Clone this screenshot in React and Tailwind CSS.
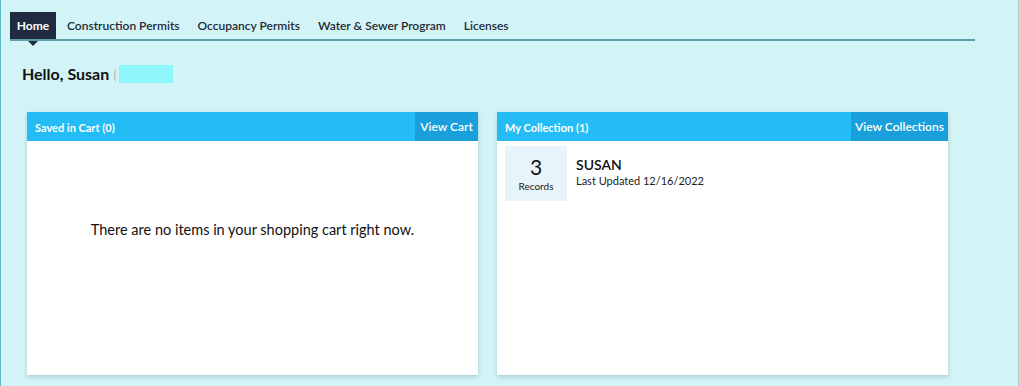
import React from 'react';

const tabs = ['Construction Permits', 'Occupancy Permits', 'Water & Sewer Program', 'Licenses'];

const Card = ({ title, action, actionWidth, children }) => (
  <div className="flex flex-col bg-white shadow-[0_2px_4px_rgba(80,140,150,0.35)] h-[263px]">
    <div className="flex items-stretch h-[29px] bg-[#23bcf4]">
      <p className="flex-1 pl-2 pt-[10px] text-[11px] font-bold text-white leading-none">{title}</p>
      <button className={`${actionWidth} bg-[#199fdc] text-white text-[12px] font-semibold leading-none`}>{action}</button>
    </div>
    {children}
  </div>
);

const App = () => {
  return (
    <div className="w-[1019px] h-[386px] bg-[#d3f4f6] border-l border-[#5cb8c4] border-r border-r-[#b9c9cc] overflow-hidden" style={{ fontFamily: 'Lato, "Open Sans", sans-serif' }}>
      {/* tab bar */}
      <div className="ml-[9px] mr-[43px] mt-[12px] flex items-end border-b-2 border-[#5d9eaa] h-[29px]">
        <div className="relative h-[27px] w-[46px] mr-[2px] bg-[#1e2b40] text-white text-[12px] font-bold flex items-center justify-center">
          Home
          <span className="absolute left-1/2 -translate-x-1/2 top-full mt-[2px] w-0 h-0 border-x-[5px] border-x-transparent border-t-[5px] border-t-[#1e2b40]"></span>
        </div>
        {tabs.map((t) => (
          <div key={t} className="h-[27px] px-[9px] flex items-center text-[12px] font-semibold text-[#1f2a36]">{t}</div>
        ))}
      </div>

      <div className="flex items-center mt-[23px] ml-[21px] h-[20px]">
        <h1 className="text-[16px] font-bold text-[#111]">Hello, Susan</h1>
        <span className="ml-[4px] text-[16px] text-[#bbb] w-[3px] overflow-hidden">(</span>
        <span className="ml-[3px] w-[54px] h-[18px] bg-[#8ef7fb]"></span>
      </div>

      <div className="flex gap-[19px] ml-[26px] mt-[28px]">
        <div className="w-[451px]">
          <Card title="Saved in Cart (0)" action="View Cart" actionWidth="w-[63px]">
            <div className="flex justify-center pt-[78px]">
              <p className="text-[14.5px] text-[#111]">There are no items in your shopping cart right now.</p>
            </div>
          </Card>
        </div>
        <div className="w-[451px]">
          <Card title="My Collection (1)" action="View Collections" actionWidth="w-[97px]">
            <div className="flex gap-[9px] pl-[8px] pt-[5px]">
              <div className="w-[62px] h-[55px] bg-[#e7f4fa] flex flex-col items-center justify-center">
                <span className="text-[21px] leading-none text-[#111]">3</span>
                <span className="text-[10px] leading-none mt-[4px] text-[#222]">Records</span>
              </div>
              <div className="pt-[12px]">
                <p className="text-[14px] font-semibold leading-none text-[#111]">SUSAN</p>
                <p className="text-[11px] leading-none mt-[3px] text-[#222]">Last Updated 12/16/2022</p>
              </div>
            </div>
          </Card>
        </div>
      </div>
    </div>
  );
};

export default App;
